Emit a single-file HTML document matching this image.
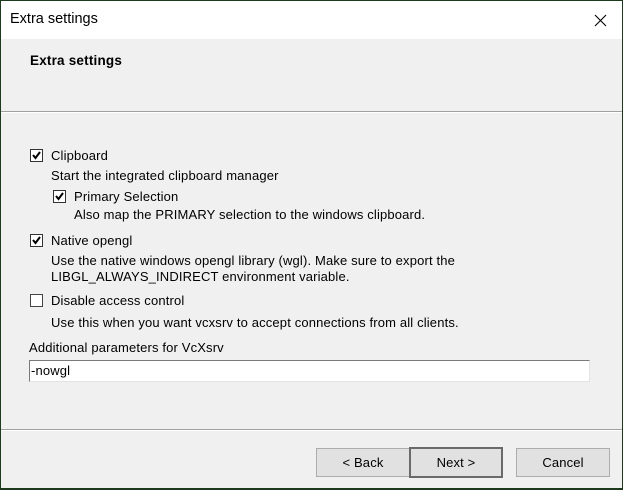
<!DOCTYPE html>
<html><head><style>
body{margin:0;width:623px;height:490px;background:#1d3a1d;position:relative;overflow:hidden;font-family:"Liberation Sans",sans-serif;font-size:13px;letter-spacing:0.15px;color:#000}
.win{position:absolute;left:1px;top:1px;width:621px;height:487px;background:#f0f0f0}
.title{position:absolute;left:0;top:0;width:621px;height:38px;background:#fff}
.t{position:absolute;white-space:nowrap;line-height:15px}
.cb{position:absolute;width:11px;height:11px;border:1px solid #333;background:#fff}
.cb svg{position:absolute;left:0;top:0}
.btn{position:absolute;top:447px;height:27px;border:1px solid #adadad;background:#e1e1e1;text-align:center;line-height:27px;font-size:13px;box-sizing:content-box}
</style></head><body>
<div class="win">
<div class="title">
<div class="t" style="left:9px;top:11px;font-size:14.5px;letter-spacing:0">Extra settings</div>
<svg style="position:absolute;left:593px;top:13px" width="13" height="13"><path d="M1 1L12 12M12 1L1 12" stroke="#000" stroke-width="1.1"/></svg>
</div>
<div class="t" style="left:29px;top:52px;font-weight:bold;font-size:13.5px;letter-spacing:0.2px">Extra settings</div>
<div style="position:absolute;left:0;top:110px;width:621px;height:1px;background:#a0a0a0"></div>
<div style="position:absolute;left:0;top:111px;width:621px;height:1px;background:#fff"></div>

<div class="cb" style="left:29px;top:148px"><svg width="11" height="11"><path d="M2 5L4.5 8L9 2" stroke="#000" stroke-width="2" fill="none"/></svg></div>
<div class="t" style="left:50px;top:147px">Clipboard</div>
<div class="t" style="left:50px;top:167px">Start the integrated clipboard manager</div>
<div class="cb" style="left:52px;top:189px"><svg width="11" height="11"><path d="M2 5L4.5 8L9 2" stroke="#000" stroke-width="2" fill="none"/></svg></div>
<div class="t" style="left:73px;top:188px">Primary Selection</div>
<div class="t" style="left:73px;top:206px">Also map the PRIMARY selection to the windows clipboard.</div>
<div class="cb" style="left:29px;top:233px"><svg width="11" height="11"><path d="M2 5L4.5 8L9 2" stroke="#000" stroke-width="2" fill="none"/></svg></div>
<div class="t" style="left:50px;top:232px">Native opengl</div>
<div class="t" style="left:50px;top:252px">Use the native windows opengl library (wgl). Make sure to export the</div>
<div class="t" style="left:50px;top:268px">LIBGL_ALWAYS_INDIRECT environment variable.</div>
<div class="cb" style="left:29px;top:293px;border-color:#444"></div>
<div class="t" style="left:50px;top:292px">Disable access control</div>
<div class="t" style="left:50px;top:314px">Use this when you want vcxsrv to accept connections from all clients.</div>
<div class="t" style="left:28px;top:339px">Additional parameters for VcXsrv</div>
<div style="position:absolute;left:28px;top:359px;width:559px;height:20px;background:#fff;border:1px solid #7a7a7a;border-right-color:#e3e3e3;border-bottom-color:#e3e3e3"></div>
<div class="t" style="left:30px;top:362px">-nowgl</div>
<div style="position:absolute;left:0;top:428px;width:621px;height:1px;background:#a0a0a0"></div>
<div style="position:absolute;left:0;top:429px;width:621px;height:1px;background:#fff"></div>
<div class="btn" style="left:315px;width:92px">&lt; Back</div>
<div class="btn" style="left:408px;width:90px;border:2px solid #6a6a6a;top:446px">Next &gt;</div>
<div class="btn" style="left:515px;width:92px">Cancel</div>
</div>
</body></html>
